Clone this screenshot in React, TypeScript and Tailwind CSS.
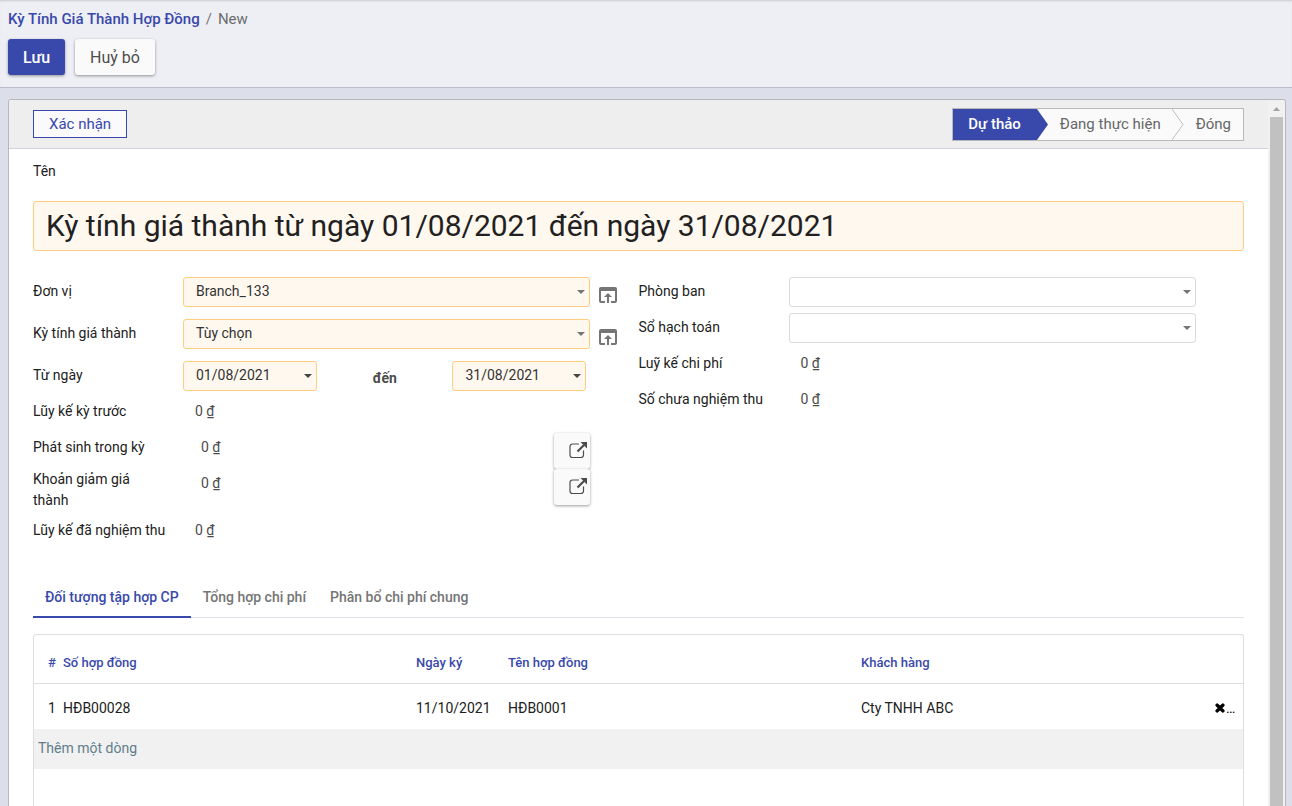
import type { ReactNode } from 'react';
import { FaTimes } from 'react-icons/fa';
import { MdOpenInBrowser } from 'react-icons/md';

function Caret({ dark = false }: { dark?: boolean }) {
  return (
    <svg
      viewBox="0 0 8 4"
      aria-hidden="true"
      className={`pointer-events-none absolute right-[5px] top-[13px] h-1 w-2 ${dark ? 'text-[#444]' : 'text-[#757575]'}`}
    >
      <path d="M0 0h8L4 4z" fill="currentColor" />
    </svg>
  );
}

type RowProps = { label: string; htmlFor: string; tall?: boolean; wrap?: boolean; children: ReactNode };

function Row({ label, htmlFor, tall = false, wrap = false, children }: RowProps) {
  return (
    <div className={`flex items-start ${tall ? 'min-h-[42px]' : 'min-h-9'}`}>
      <label htmlFor={htmlFor} className={`w-[150px] shrink-0 ${wrap ? 'pb-0.5 pr-[50px] pt-[3px]' : 'whitespace-nowrap pt-[7px]'}`}>
        {label}
      </label>
      {children}
    </div>
  );
}

function SelectField({ id, value, required = false }: { id: string; value: string; required?: boolean }) {
  return (
    <>
      <div className="relative mt-[3px] min-w-0 flex-1">
        <select
          id={id}
          defaultValue={value}
          className={`block h-[30px] w-full appearance-none rounded-[3px] border px-3 pb-0.5 text-[#333] ${
            required ? 'border-[#ffcc80] bg-[#fff8ef]' : 'border-[#dadada] bg-white'
          }`}
        >
          <option>{value}</option>
        </select>
        <Caret />
      </div>
      <div className={`flex shrink-0 justify-start pl-1.5 pt-[9px] ${required ? 'w-[49px]' : 'w-12'}`}>
        {required && (
          <button type="button" aria-label="Mở" className="text-[#757575]">
            <MdOpenInBrowser size={24} />
          </button>
        )}
      </div>
    </>
  );
}

function DateField({ id, value, label }: { id: string; value: string; label?: string }) {
  return (
    <div className="relative mt-[3px] w-[134px]">
      <input
        id={id}
        type="text"
        aria-label={label}
        defaultValue={value}
        className="block h-[30px] w-full rounded-[3px] border border-[#ffcc80] bg-[#fff8ef] px-3 pb-0.5 text-[#333]"
      />
      <Caret dark />
    </div>
  );
}

function Amount({ id, indent = false }: { id: string; indent?: boolean }) {
  return (
    <output id={id} className={`flex-1 pt-[7px] text-[#4c4c4c] ${indent ? 'pl-[18px]' : 'pl-3'}`}>
      0 ₫
    </output>
  );
}

function ExternalButton() {
  return (
    <button
      type="button"
      aria-label="Xem chi tiết"
      className="-mb-[3px] mr-[49px] mt-[3px] flex h-9 w-9 shrink-0 items-center justify-end rounded-[3px] bg-[#fafafa] pb-0.5 pr-0.5 shadow-[0_1px_3px_rgba(0,0,0,0.4)]"
    >
      <svg viewBox="0 0 20 18" className="h-[18px] w-5" fill="none" aria-hidden="true">
        <path d="M11 3H4.5A2.5 2.5 0 0 0 2 5.500V14a2.500 2.500 0 0 0 2.500 2.500H13a2.500 2.500 0 0 0 2.500-2.500V9.500" stroke="#4c4c4c" strokeWidth="1.200" />
        <path d="M9.500 10.500L16 4" stroke="#4c4c4c" strokeWidth="2.200" />
        <path d="M12.500 1H19v6.500z" fill="#4c4c4c" />
      </svg>
    </button>
  );
}

function Chevron({ active = false }: { active?: boolean }) {
  return (
    <svg viewBox="0 0 12 31" className="h-[31px] w-3 shrink-0" aria-hidden="true">
      {active ? (
        <path d="M0 0L11 15.500L0 31z" fill="#3949ab" />
      ) : (
        <path d="M0 0L11 15.500L0 31" fill="none" stroke="#bdbdbd" />
      )}
    </svg>
  );
}

const headers = ['Số hợp đồng', 'Ngày ký', 'Tên hợp đồng', 'Khách hàng'];

export default function App() {
  return (
    <div className="flex h-screen flex-col overflow-hidden bg-[#dcdeea] font-['Roboto',sans-serif] text-[14px] leading-[21px] text-[#212121]">
      <header className="shrink-0 border-b border-[#bbbcc9] bg-[#eeeff5] px-2 pb-3 pt-[9px] shadow-[inset_0_2px_2px_-1px_rgba(0,0,0,0.15)]">
        <nav aria-label="Breadcrumb" className="flex gap-1.5 text-[15px]">
          <a href="#list" className="font-medium text-[#3949ab]">Kỳ Tính Giá Thành Hợp Đồng</a>
          <span className="text-[#757575]">/</span>
          <span className="text-[#6c6c6c]">New</span>
        </nav>
        <div className="mt-[9px] flex gap-2.5 text-[16px]">
          <button type="button" className="h-9 rounded-[3px] bg-[#3949ab] px-[15px] font-medium text-white shadow-[0_1px_3px_rgba(0,0,0,0.4)]">Lưu</button>
          <button type="button" className="h-9 rounded-[3px] bg-[#fafafa] px-[15px] text-[#4c4c4c] shadow-[0_1px_3px_rgba(0,0,0,0.4)]">Huỷ bỏ</button>
        </div>
      </header>

      <main className="flex min-h-0 flex-1 pl-2 pr-1.5 pt-[11px]">
        <div className="flex min-w-0 flex-1 overflow-hidden rounded-t-[3px] border border-b-0 border-[#b7b7bd] bg-white">
          <div className="flex min-w-0 flex-1 flex-col overflow-hidden">
            <div className="flex h-[49px] shrink-0 items-center justify-between border-b border-[#ced4da] bg-[#eee] px-6">
              <button type="button" className="h-7 border border-[#3949ab] bg-[#fafafa] px-[15px] text-[15px] text-[#3949ab]">Xác nhận</button>
              <div className="flex h-[33px] border border-[#b9b9b9] bg-[#fafafa] text-[15px] leading-[30px] text-[#666]">
                <button type="button" aria-current="step" className="bg-[#3949ab] pl-[15px] pr-4 font-medium text-white">Dự thảo</button>
                <Chevron active />
                <button type="button" className="px-[11px]">Đang thực hiện</button>
                <Chevron />
                <button type="button" className="px-3">Đóng</button>
              </div>
            </div>

            <form className="flex min-h-0 flex-1 flex-col px-6 pt-3">
              <label htmlFor="name" className="shrink-0">Tên</label>
              <input
                id="name"
                type="text"
                defaultValue="Kỳ tính giá thành từ ngày 01/08/2021 đến ngày 31/08/2021"
                className="mt-[19px] h-[50px] w-full shrink-0 rounded-[3px] border border-[#ffcc80] bg-[#fff8ef] px-3 pb-0.5 text-[30px]"
              />

              <div className="mt-[23px] grid shrink-0 grid-cols-2">
                <div>
                  <Row label="Đơn vị" htmlFor="unit" tall><SelectField id="unit" value="Branch_133" required /></Row>
                  <Row label="Kỳ tính giá thành" htmlFor="period" tall><SelectField id="period" value="Tùy chọn" required /></Row>
                  <Row label="Từ ngày" htmlFor="from">
                    <div className="mr-[52px] flex flex-1 items-start justify-between">
                      <DateField id="from" value="01/08/2021" />
                      <span className="pt-2.5 font-bold text-[#4c4c4c]">đến</span>
                      <DateField id="to" value="31/08/2021" label="Đến ngày" />
                    </div>
                  </Row>
                  <Row label="Lũy kế kỳ trước" htmlFor="before"><Amount id="before" /></Row>
                  <Row label="Phát sinh trong kỳ" htmlFor="arising"><Amount id="arising" indent /><ExternalButton /></Row>
                  <Row label="Khoản giảm giá thành" htmlFor="reduction" wrap><Amount id="reduction" indent /><ExternalButton /></Row>
                  <Row label="Lũy kế đã nghiệm thu" htmlFor="accepted"><Amount id="accepted" /></Row>
                </div>
                <div>
                  <Row label="Phòng ban" htmlFor="department"><SelectField id="department" value="" /></Row>
                  <Row label="Sổ hạch toán" htmlFor="ledger"><SelectField id="ledger" value="" /></Row>
                  <Row label="Luỹ kế chi phí" htmlFor="cost"><Amount id="cost" /></Row>
                  <Row label="Số chưa nghiệm thu" htmlFor="pending"><Amount id="pending" /></Row>
                </div>
              </div>

              <div role="tablist" className="mt-[29px] flex h-10 shrink-0 border-b border-[#dee2e6] font-medium text-[#757575]">
                <button type="button" role="tab" aria-selected="true" className="-mb-px border-b-2 border-[#3949ab] px-3 text-[#3949ab]">Đối tượng tập hợp CP</button>
                <button type="button" role="tab" aria-selected="false" className="px-3">Tổng hợp chi phí</button>
                <button type="button" role="tab" aria-selected="false" className="px-3">Phân bổ chi phí chung</button>
              </div>

              <div className="mt-4 min-h-0 flex-1 overflow-hidden rounded-t-[3px] border border-b-0 border-[#dedede]">
                <table className="w-full table-fixed text-left">
                  <colgroup>
                    <col className="w-[25px]" />
                    <col />
                    <col className="w-[92px]" />
                    <col />
                    <col />
                    <col className="w-[33px]" />
                  </colgroup>
                  <thead>
                    <tr className="h-12 border-b border-[#dedede] text-[13px] text-[#3949ab]">
                      <th className="pl-3.5 pt-2 font-medium">#</th>
                      {headers.map((h) => (
                        <th key={h} className="px-1 pt-2 font-medium">{h}</th>
                      ))}
                      <th aria-label="Xoá" />
                    </tr>
                  </thead>
                  <tbody>
                    <tr className="h-[46px]">
                      <td className="pl-3.5 pt-1">1</td>
                      <td className="px-1 pt-1">HĐB00028</td>
                      <td className="whitespace-nowrap px-1 pt-1">11/10/2021</td>
                      <td className="px-1 pt-1">HĐB0001</td>
                      <td className="px-1 pt-1">Cty TNHH ABC</td>
                      <td className="px-1 pt-1">
                        <span className="flex items-center text-black">
                          <button type="button" aria-label="Xoá dòng"><FaTimes size={12} strokeWidth={50} stroke="currentColor" /></button>…
                        </span>
                      </td>
                    </tr>
                    <tr className="h-10 bg-[#f1f1f1]">
                      <td colSpan={6} className="px-1 pb-0.5 text-[#607d8b]">
                        <a href="#add">Thêm một dòng</a>
                      </td>
                    </tr>
                  </tbody>
                </table>
              </div>
            </form>
          </div>

          <div aria-hidden="true" className="flex w-[17px] shrink-0 flex-col items-center bg-[#f1f1f1]">
            <svg viewBox="0 0 17 17" className="h-[17px] w-[17px] shrink-0">
              <path d="M5 11h7L8.500 7z" fill="#a3a3a3" />
            </svg>
            <div className="w-[13px] flex-1 bg-[#c1c1c1]" />
          </div>
        </div>
      </main>
    </div>
  );
}
